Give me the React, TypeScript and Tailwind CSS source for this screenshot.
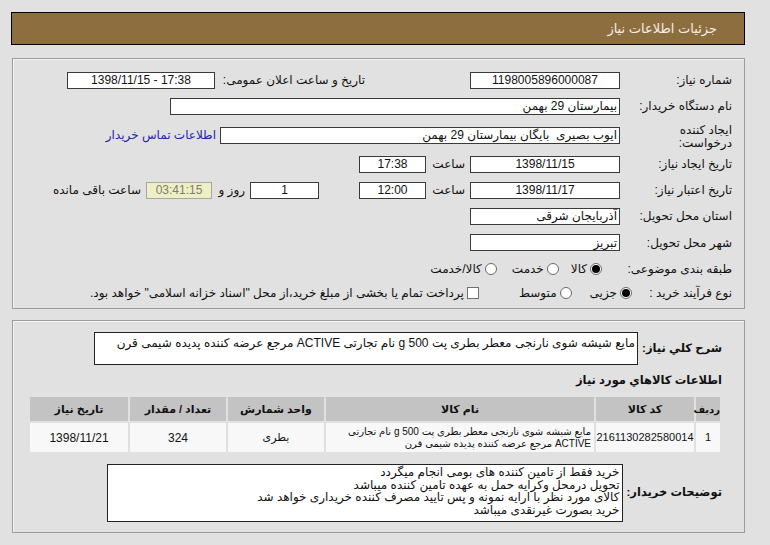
import React from "react";

function Box({ className = "", children, ltr = false }: { className?: string; children?: React.ReactNode; ltr?: boolean }) {
  return (
    <div
      dir={ltr ? "ltr" : undefined}
      className={`h-[17px] shrink-0 border border-[#3a3a3a] bg-white flex items-center leading-none whitespace-nowrap overflow-hidden ${className}`}
    >
      {children}
    </div>
  );
}

function Radio({ checked = false }: { checked?: boolean }) {
  return (
    <div className="w-[12px] h-[12px] shrink-0 rounded-full border border-[#6a6a6a] bg-white flex items-center justify-center">
      {checked && <div className="w-[8px] h-[8px] rounded-full bg-black" />}
    </div>
  );
}

export default function App() {
  return (
    <div
      dir="rtl"
      className="w-[770px] h-[545px] overflow-hidden bg-[#e1e1e1] text-[12px] text-[#111] font-['Liberation_Sans','DejaVu_Sans',sans-serif] pt-[12px]"
    >
      {/* header bar */}
      <div className="w-[734px] mr-[25px] h-[33px] border border-black bg-[#8d6e3f] flex items-center pr-[27px] text-[13px] text-[#f4efe4]">
        جزئیات اطلاعات نیاز
      </div>

      {/* panel 1 */}
      <div className="w-[733px] mr-[25px] mt-[13px] border border-[#9c9c9c] shadow-[inset_1px_1px_0_#f4f4f4] pt-[8px] pb-[4px] pr-[12px] flex flex-col">
        {/* row 1 */}
        <div className="h-[26px] flex items-center">
          <div className="w-[112px] shrink-0">شماره نیاز:</div>
          <Box className="w-[150px] justify-center">1198005896000087</Box>
          <div className="w-[105px] shrink-0" />
          <div className="w-[150px] shrink-0">تاریخ و ساعت اعلان عمومی:</div>
          <Box ltr className="w-[148px] justify-center">1398/11/15 - 17:38</Box>
        </div>
        {/* row 2 */}
        <div className="h-[26px] flex items-center">
          <div className="w-[112px] shrink-0">نام دستگاه خریدار:</div>
          <Box className="w-[450px] pr-[2px]">بیمارستان 29 بهمن</Box>
        </div>
        {/* row 3 */}
        <div className="h-[32px] flex items-center">
          <div className="w-[112px] shrink-0 leading-[13px] pt-[3px]">
            <div>ایجاد کننده</div>
            <div>درخواست:</div>
          </div>
          <Box className="w-[400px] pr-[2px]">ایوب بصیری&nbsp; بایگان بیمارستان 29 بهمن</Box>
          <a className="mr-[4px] text-[#2424a8] whitespace-nowrap">اطلاعات تماس خریدار</a>
        </div>
        {/* row 4 */}
        <div className="h-[26px] flex items-center">
          <div className="w-[112px] shrink-0">تاریخ ایجاد نیاز:</div>
          <Box className="w-[150px] justify-center">1398/11/15</Box>
          <div className="w-[44px] shrink-0 pr-[5px]">ساعت</div>
          <Box className="w-[67px] justify-center">17:38</Box>
        </div>
        {/* row 5 */}
        <div className="h-[26px] flex items-center">
          <div className="w-[112px] shrink-0">تاریخ اعتبار نیاز:</div>
          <Box className="w-[150px] justify-center">1398/11/17</Box>
          <div className="w-[44px] shrink-0 pr-[5px]">ساعت</div>
          <Box className="w-[67px] justify-center">12:00</Box>
          <div className="w-[40px] shrink-0" />
          <Box className="w-[69px] justify-center">1</Box>
          <div className="w-[38px] shrink-0 pr-[5px] whitespace-nowrap">روز و</div>
          <div className="w-[66px] h-[17px] shrink-0 border border-[#a8a8a0] bg-[#efefc6] text-[#7c7c74] flex items-center justify-center leading-none">
            03:41:15
          </div>
          <div className="mr-[5px] whitespace-nowrap">ساعت باقی مانده</div>
        </div>
        {/* row 6 */}
        <div className="h-[26px] flex items-center">
          <div className="w-[112px] shrink-0">استان محل تحویل:</div>
          <Box className="w-[150px] pr-[2px]">آذربایجان شرقی</Box>
        </div>
        {/* row 7 */}
        <div className="h-[27px] flex items-center">
          <div className="w-[112px] shrink-0">شهر محل تحویل:</div>
          <Box className="w-[150px] pr-[2px]">تبریز</Box>
        </div>
        {/* row 8 */}
        <div className="h-[26px] flex items-center whitespace-nowrap">
          <div className="w-[130px] shrink-0">طبقه بندی موضوعی:</div>
          <Radio checked />
          <span className="mr-[3px]">کالا</span>
          <div className="mr-[12px]"><Radio /></div>
          <span className="mr-[3px]">خدمت</span>
          <div className="mr-[15px]"><Radio /></div>
          <span className="mr-[3px]">کالا/خدمت</span>
        </div>
        {/* row 9 */}
        <div className="h-[22px] flex items-center whitespace-nowrap">
          <div className="w-[100px] shrink-0">نوع فرآیند خرید :</div>
          <Radio checked />
          <span className="mr-[3px]">جزیی</span>
          <div className="mr-[18px]"><Radio /></div>
          <span className="mr-[3px]">متوسط</span>
          <div className="mr-[40px] w-[12px] h-[12px] shrink-0 border border-[#707070] bg-white" />
          <span className="mr-[3px]">پرداخت تمام یا بخشی از مبلغ خرید،از محل "اسناد خزانه اسلامی" خواهد بود.</span>
        </div>
      </div>

      {/* panel 2 */}
      <div className="w-[733px] mr-[25px] mt-[11px] border border-[#9c9c9c] shadow-[inset_1px_1px_0_#f4f4f4] pt-[11px] pb-[10px] pr-[22px] pl-[14px] flex flex-col">
        <div className="flex items-center">
          <div className="shrink-0 text-[11.5px] font-bold whitespace-nowrap">شرح کلي نياز:</div>
          <div className="flex-1 ml-[67px] mr-[4px] h-[33px] border border-[#222] bg-white pr-[2px] pt-[3px] leading-[14px] whitespace-nowrap overflow-hidden">
            مایع شیشه شوی نارنجی معطر بطری پت 500 g نام تجارتی ACTIVE مرجع عرضه کننده پدیده شیمی قرن
          </div>
        </div>
        <div className="mt-[7px] h-[16px] leading-[16px] text-[11.5px] font-bold whitespace-nowrap">اطلاعات کالاهاي مورد نياز</div>
        <table className="mt-[7px] w-[694px] table-fixed border-separate border-spacing-[2px] text-[11px]">
          <colgroup>
            <col className="w-[24px]" />
            <col className="w-[98px]" />
            <col className="w-[268px]" />
            <col className="w-[96px]" />
            <col className="w-[96px]" />
            <col className="w-[98px]" />
          </colgroup>
          <thead>
            <tr className="h-[24px] bg-[#c3c3c3]">
              <th className="font-bold text-[10px] whitespace-nowrap">ردیف</th>
              <th className="font-bold">کد کالا</th>
              <th className="font-bold">نام کالا</th>
              <th className="font-bold">واحد شمارش</th>
              <th className="font-bold">تعداد / مقدار</th>
              <th className="font-bold">تاریخ نیاز</th>
            </tr>
          </thead>
          <tbody>
            <tr className="h-[29px] bg-[#f8f8f8] text-center">
              <td>1</td>
              <td className="text-[11px] whitespace-nowrap">2161130282580014</td>
              <td className="text-right pr-[3px] leading-[12px] text-[10px] whitespace-nowrap">
                <div>مایع شیشه شوی نارنجی معطر بطری پت 500 g نام تجارتی</div>
                <div>ACTIVE مرجع عرضه کننده پدیده شیمی قرن</div>
              </td>
              <td>بطری</td>
              <td className="text-[12px]">324</td>
              <td className="text-[12px]">1398/11/21</td>
            </tr>
          </tbody>
        </table>
        <div className="mt-[10px] flex items-center">
          <div className="shrink-0 text-[11.5px] font-bold whitespace-nowrap">توضیحات خریدار:</div>
          <div className="flex-1 ml-[80px] mr-[4px] h-[58px] border border-[#222] bg-white pr-[2px] pt-[1px] leading-[12.5px] whitespace-nowrap overflow-hidden">
            <div>خرید فقط از تامین کننده های بومی انجام میگردد</div>
            <div>تحویل درمحل وکرایه حمل به عهده تامین کننده میباشد</div>
            <div>کالای مورد نظر با ارایه نمونه و پس تایید مصرف کننده خریداری خواهد شد</div>
            <div>خرید بصورت غیرنقدی میباشد</div>
          </div>
        </div>
      </div>
    </div>
  );
}
